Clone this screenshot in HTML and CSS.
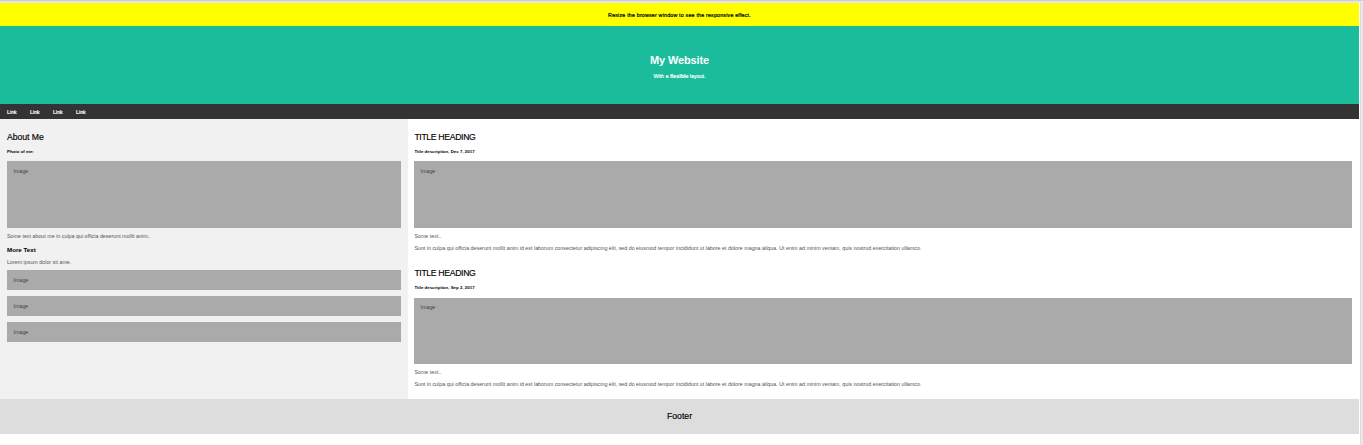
FILE: index.html
```html
<!DOCTYPE html>
<html lang="en">
<head>
<meta charset="utf-8">
<title>My Website</title>
<link rel="stylesheet" href="styles.css">
</head>
<body>
<div class="page">
  <div class="notice"><span>Resize the browser window to see the responsive effect.</span></div>
  <header class="header">
    <h1>My Website</h1>
    <p>With a <b>flexible</b> layout.</p>
  </header>
  <nav class="navbar"><a>Link</a><a>Link</a><a>Link</a><a>Link</a></nav>
  <div class="row">
    <aside class="side">
      <h2 class="about">About Me</h2>
      <h5 class="photo">Photo of me:</h5>
      <div class="image tall">Image</div>
      <p class="bio">Some text about me in culpa qui officia deserunt mollit anim..</p>
      <h3>More Text</h3>
      <p class="lorem">Lorem ipsum dolor sit ame.</p>
      <div class="image">Image</div>
      <div class="image">Image</div>
      <div class="image">Image</div>
    </aside>
    <main class="main">
      <article class="post">
        <h2>TITLE HEADING</h2>
        <h5>Title description, Dec 7, 2017</h5>
        <div class="image tall">Image</div>
        <p>Some text..</p>
        <p class="body">Sunt in culpa qui officia deserunt mollit anim id est laborum consectetur adipiscing elit, sed do eiusmod tempor incididunt ut labore et dolore magna aliqua. Ut enim ad minim veniam, quis nostrud exercitation ullamco.</p>
      </article>
      <article class="post second">
        <h2>TITLE HEADING</h2>
        <h5>Title description, Sep 2, 2017</h5>
        <div class="image tall">Image</div>
        <p>Some text..</p>
        <p class="body">Sunt in culpa qui officia deserunt mollit anim id est laborum consectetur adipiscing elit, sed do eiusmod tempor incididunt ut labore et dolore magna aliqua. Ut enim ad minim veniam, quis nostrud exercitation ullamco.</p>
      </article>
    </main>
  </div>
  <footer class="footer"><h2>Footer</h2></footer>
</div>
</body>
</html>
```

FILE: styles.css
```css
* { box-sizing: border-box; }
html { background: #e8e8e8; }
body {
  margin: 0;
  height: 445px;
  overflow: hidden;
  border-top: 1px solid #ccc;
  font: 5.33px/6px "Liberation Sans", Arial, sans-serif;
  color: #000;
}
h1, h2, h3, h5, p { margin: 0; white-space: nowrap; }
.page {
  width: 1361px;
  height: 444px;
  padding-right: 1px;
  background: #fff;
  border-top: 2px solid #e6e6e6;
  border-right: 1px solid #ddd;
}
.notice {
  height: 23px;
  padding-top: 9px;
  background: #ff0;
  text-align: center;
  letter-spacing: 0.18px;
  -webkit-text-stroke: 0.2px #000;
}
.header {
  height: 78px;
  padding-top: 28px;
  background: #1abc9c;
  color: #fff;
  text-align: center;
}
.header h1 { font-size: 11px; line-height: 12px; letter-spacing: -0.15px; }
.header p { margin-top: 7px; -webkit-text-stroke: 0.15px #fff; }
.navbar {
  display: flex;
  height: 15px;
  padding: 5px 0 0 7px;
  background: #333;
  color: #fff;
  -webkit-text-stroke: 0.2px #fff;
}
.navbar a { width: 23px; }
.row { display: flex; height: 280px; color: #555; }
.side {
  width: 408px;
  padding: 13px 7px 0;
  background: #f1f1f1;
}
.main { flex: 1; padding: 13px 7px 0 6px; }
.main h2, .main h5, .main p { padding-left: 0.4px; }
h2 {
  font-size: 8.7px;
  line-height: 10px;
  font-weight: 400;
  letter-spacing: -0.35px;
  color: #000;
  -webkit-text-stroke: 0.15px #000;
}
.about { letter-spacing: -0.05px; }
h5 { margin: 7px 0 6px; font-size: 4.4px; line-height: 6px; color: #000; }
h3 { margin: 7px 0 5px; font-size: 6.2px; line-height: 8px; color: #000; }
.image {
  height: 20px;
  margin-bottom: 6px;
  padding: 7px 6.5px 0;
  background: #aaa;
  color: #444;
}
.image.tall { height: 67px; margin-bottom: 5px; }
.lorem { margin-bottom: 5px; }
.body { margin-top: 6px; }
.second { margin-top: 17px; }
.second h5 { margin-bottom: 7px; }
.second .image.tall { height: 66px; padding-top: 6px; }
.footer {
  height: 35px;
  padding-top: 12px;
  background: #ddd;
  text-align: center;
}
.footer h2 { letter-spacing: 0; }
```
